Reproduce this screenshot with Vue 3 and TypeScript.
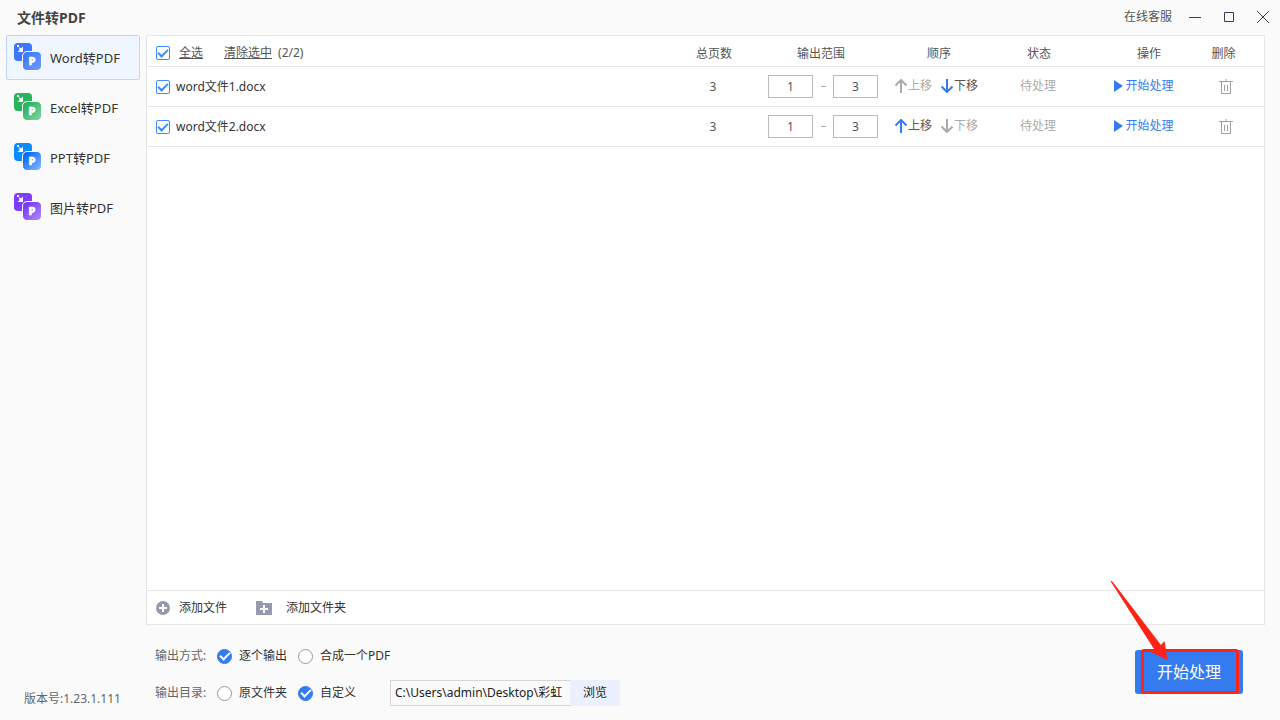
<script setup lang="ts">
import { computed, ref } from 'vue'

interface Tool { id: string; label: string; back: string; from: string; to: string }
interface FileRow { name: string; pages: number; start: string; end: string; checked: boolean }

const tools: Tool[] = [
  { id: 'word', label: 'Word转PDF', back: '#3b76ff', from: '#3f7bff', to: '#6f9dff' },
  { id: 'excel', label: 'Excel转PDF', back: '#27b45c', from: '#2bb35e', to: '#86d6a5' },
  { id: 'ppt', label: 'PPT转PDF', back: '#0a8bff', from: '#0a6cff', to: '#8fc0ff' },
  { id: 'image', label: '图片转PDF', back: '#7f3dff', from: '#7a3df5', to: '#b28cff' },
]
const active = ref('word')

const files = ref<FileRow[]>([
  { name: 'word文件1.docx', pages: 3, start: '1', end: '3', checked: true },
  { name: 'word文件2.docx', pages: 3, start: '1', end: '3', checked: true },
])
const selected = computed(() => files.value.filter((f) => f.checked).length)
const allChecked = computed({
  get: () => files.value.length > 0 && selected.value === files.value.length,
  set: (v: boolean) => files.value.forEach((f) => (f.checked = v)),
})

const mode = ref('each')
const target = ref('custom')
const path = ref('C:\\Users\\admin\\Desktop\\彩虹')

function move(i: number, step: number) {
  const [row] = files.value.splice(i, 1)
  files.value.splice(i + step, 0, row)
}
function clearSelected() {
  files.value = files.value.filter((f) => !f.checked)
}
</script>

<template>
  <div class="app">
    <header class="titlebar">
      <h1>文件转PDF</h1>
      <a href="#" class="service">在线客服</a>
      <button class="win" aria-label="最小化">
        <svg width="14" height="14" viewBox="0 0 14 14"><path d="M1 7.5h12" /></svg>
      </button>
      <button class="win" aria-label="最大化">
        <svg width="14" height="14" viewBox="0 0 14 14"><path d="M2.5 2.5h9v9h-9z" /></svg>
      </button>
      <button class="win" aria-label="关闭">
        <svg width="14" height="14" viewBox="0 0 14 14"><path d="M1 1l12 12M13 1L1 13" /></svg>
      </button>
    </header>

    <aside class="side">
      <nav>
        <button v-for="t in tools" :key="t.id" :class="['tool', { on: active === t.id }]" @click="active = t.id">
          <svg width="28" height="28" viewBox="0 0 28 28" aria-hidden="true">
            <defs>
              <linearGradient :id="'g-' + t.id" x1="0" y1="0" x2="1" y2="1">
                <stop offset="0.2" :stop-color="t.from" />
                <stop offset="1" :stop-color="t.to" />
              </linearGradient>
            </defs>
            <rect x="0" y="0" width="18" height="18" rx="4" :fill="t.back" />
            <path d="M3 2h2v2h-2zM5 4l2.200 1.600L9 3.500V9H3.500L5.500 7.200z" fill="#fff" />
            <rect x="8.5" y="8.5" width="19" height="19" rx="4.5" :fill="`url(#g-${t.id})`" stroke="#fff" />
            <text x="18" y="22" text-anchor="middle" class="mark">P</text>
          </svg>
          <span>{{ t.label }}</span>
        </button>
      </nav>
      <p class="version">版本号:1.23.1.111</p>
    </aside>

    <main class="panel">
      <div class="list">
        <table>
          <colgroup>
            <col />
            <col class="c-pages" />
            <col class="c-range" />
            <col class="c-order" />
            <col class="c-state" />
            <col class="c-action" />
            <col class="c-delete" />
          </colgroup>
          <thead>
            <tr>
              <th class="first">
                <div class="pick">
                  <input id="all" v-model="allChecked" type="checkbox" class="box" />
                  <label for="all" class="all">全选</label>
                  <button class="clear" @click="clearSelected">清除选中</button>
                  <span class="count">({{ selected }}/{{ files.length }})</span>
                </div>
              </th>
              <th>总页数</th>
              <th class="ranges">输出范围</th>
              <th>顺序</th>
              <th>状态</th>
              <th class="action">操作</th>
              <th class="remove">删除</th>
            </tr>
          </thead>
          <tbody>
            <tr v-for="(f, i) in files" :key="f.name">
              <td class="first">
                <label class="pick name"><input v-model="f.checked" type="checkbox" class="box" />{{ f.name }}</label>
              </td>
              <td>{{ f.pages }}</td>
              <td>
                <div class="range">
                  <input v-model="f.start" type="text" aria-label="起始页" />
                  <span class="dash"></span>
                  <input v-model="f.end" type="text" aria-label="结束页" />
                </div>
              </td>
              <td>
                <div class="order">
                  <button :disabled="i === 0" @click="move(i, -1)">
                    <svg width="14" height="14" viewBox="0 0 14 14"><path d="M7 14V1M1.5 6.5L7 1l5.5 5.5" /></svg>上移
                  </button>
                  <button :disabled="i === files.length - 1" @click="move(i, 1)">
                    <svg width="14" height="14" viewBox="0 0 14 14"><path d="M7 0v13M1.5 7.5L7 13l5.5-5.5" /></svg>下移
                  </button>
                </div>
              </td>
              <td class="state">待处理</td>
              <td>
                <button class="run"><svg width="9" height="12" viewBox="0 0 9 12"><path d="M0 0l9 6-9 6z" /></svg>开始处理</button>
              </td>
              <td>
                <button class="trash" aria-label="删除" @click="files.splice(i, 1)">
                  <svg width="14" height="16" viewBox="0 0 14 16"><path d="M0 2.5h14M7 0v2M2.5 3v11.5h9V3M5.5 6v6M8.5 6v6" /></svg>
                </button>
              </td>
            </tr>
          </tbody>
        </table>
      </div>
      <div class="adder">
        <button class="add-file">
          <svg width="14" height="14" viewBox="0 0 14 14"><circle cx="7" cy="7" r="7" fill="#959aaf" /><path d="M3 7h8M7 3v8" stroke="#fff" stroke-width="2" /></svg>添加文件
        </button>
        <button class="add-folder">
          <svg width="16" height="14" viewBox="0 0 16 14"><path d="M0 0h6l1 2h9v12H0z" fill="#959aaf" /><path d="M4 8h8M8 4v8" stroke="#fff" stroke-width="2" /></svg>添加文件夹
        </button>
      </div>
    </main>

    <footer class="bottom">
      <div class="options">
        <div class="line" role="radiogroup" aria-label="输出方式">
          <span class="caption">输出方式:</span>
          <label class="choice"><input v-model="mode" type="radio" name="mode" value="each" />逐个输出</label>
          <label class="choice"><input v-model="mode" type="radio" name="mode" value="merge" />合成一个PDF</label>
        </div>
        <div class="line" role="radiogroup" aria-label="输出目录">
          <span class="caption">输出目录:</span>
          <label class="choice"><input v-model="target" type="radio" name="target" value="source" />原文件夹</label>
          <label class="choice"><input v-model="target" type="radio" name="target" value="custom" />自定义</label>
          <div class="folder">
            <input v-model="path" type="text" aria-label="输出路径" />
            <button>浏览</button>
          </div>
        </div>
      </div>
      <div class="start">
        <button>开始处理</button>
        <span class="frame"></span>
        <svg class="pointer" width="60" height="82" viewBox="0 0 60 82" aria-hidden="true">
          <path d="M1 1h1L51 65l3.500-4L57.500 80 41 72l3-3L1 2z" fill="#ff2317" />
        </svg>
      </div>
    </footer>
  </div>
</template>

<style>
body {
  margin: 0;
  background: #fafafa;
}
</style>

<style scoped>
.app {
  box-sizing: border-box;
  display: grid;
  grid-template: 35px 1fr 95px / 146px 1fr;
  min-height: 100vh;
  padding-right: 15px;
  background: #fafafa;
  color: #333;
  font: 12px/18px "Noto Sans", "Noto Sans CJK SC", sans-serif;
}
button {
  padding: 0;
  border: 0;
  background: none;
  color: inherit;
  font: inherit;
  cursor: pointer;
}
input {
  box-sizing: border-box;
  margin: 0;
  color: inherit;
  font: inherit;
}
svg {
  display: block;
  flex: none;
}
.titlebar {
  grid-column: 1 / -1;
  display: flex;
  align-items: center;
  gap: 20px;
  margin-right: -5px;
  padding: 0 0 2px 17px;
}
h1 {
  flex: 1;
  margin: 0;
  padding-top: 2px;
  color: #444;
  font-size: 14px;
  line-height: 20px;
}
.service {
  margin-right: -4px;
  color: #555;
  text-decoration: none;
}
.win svg {
  fill: none;
  stroke: #333f55;
}
.side {
  grid-row: 2 / 4;
  display: flex;
  flex-direction: column;
  justify-content: space-between;
  padding: 0 6px;
}
nav {
  display: flex;
  flex-direction: column;
  gap: 5px;
}
.tool {
  box-sizing: border-box;
  display: flex;
  align-items: center;
  gap: 8px;
  height: 45px;
  padding: 0 7px;
  border: 1px solid transparent;
  border-radius: 2px;
  font-size: 13px;
}
.tool svg {
  margin-bottom: 2px;
}
.tool.on {
  border-color: #bcd6fd;
  background: #eff6ff;
}
.mark {
  fill: #fff;
  stroke: #fff;
  stroke-width: 0.6px;
  font: 800 11px "Noto Sans", sans-serif;
}
.version {
  margin: 0 0 12px 18px;
  color: #666;
}
.panel {
  display: flex;
  flex-direction: column;
  border: 1px solid #e6e6e6;
  background: #fff;
}
.list {
  flex: 1;
}
table {
  width: 100%;
  border-collapse: separate;
  border-spacing: 0;
  table-layout: fixed;
}
.c-pages { width: 80px; }
.c-range { width: 140px; }
.c-order { width: 90px; }
.c-state { width: 110px; }
.c-action { width: 94px; }
.c-delete { width: 77px; }
th,
td {
  box-sizing: border-box;
  height: 40px;
  padding: 0;
  border-bottom: 1px solid #e6e6e6;
  color: #555;
  font-weight: 400;
  text-align: center;
}
th {
  height: 31px;
  padding: 6px 0 0 2px;
}
th.ranges,
th.remove {
  padding: 6px 4px 0 0;
}
th.action {
  padding-left: 18px;
}
th.first {
  padding: 4px 0 0 9px;
}
td.first {
  padding-left: 9px;
}
.pick {
  display: flex;
  align-items: center;
}
.name {
  gap: 6px;
  color: #333;
}
.all {
  margin: 0 21px 0 9px;
}
.all,
.clear {
  text-decoration: underline;
}
.count {
  margin-left: 6px;
}
.box {
  display: grid;
  flex: none;
  place-items: center;
  width: 14px;
  height: 14px;
  border: 1px solid #3c8cff;
  border-radius: 2px;
  background: #fff;
  appearance: none;
}
.box:checked::after,
.choice input:checked::after {
  box-sizing: border-box;
  width: 10px;
  height: 6px;
  border: solid #3c8cff;
  border-width: 0 0 2px 2px;
  content: "";
  transform: translateY(-1px) rotate(-45deg);
}
.range {
  display: flex;
  align-items: center;
  justify-content: center;
}
.range input {
  width: 45px;
  height: 23px;
  padding: 0;
  border: 1px solid #bbb;
  background: #fff;
  text-align: center;
}
.dash {
  width: 5px;
  height: 1px;
  margin: 0 7px 0 8px;
  background: #aaa;
}
.order {
  display: flex;
  gap: 8px;
  justify-content: center;
  padding: 0 4px 2px 0;
}
.order button {
  display: flex;
  align-items: center;
}
.order svg {
  fill: none;
  stroke: #337bef;
  stroke-width: 2;
}
.order button:disabled {
  color: #aaa;
}
.order button:disabled svg {
  stroke: #aaa;
}
.state {
  padding-bottom: 2px;
  color: #aaa;
}
.run {
  display: flex;
  align-items: center;
  gap: 2px;
  margin: 0 auto;
  padding: 0 0 2px 8px;
  color: #337bef;
}
.run svg {
  fill: #337bef;
}
.trash {
  display: block;
  margin: 0 auto;
}
.trash svg {
  fill: none;
  stroke: #a0a0a0;
}
.adder {
  display: flex;
  gap: 29px;
  height: 33px;
  padding-left: 9px;
  border-top: 1px solid #e6e6e6;
}
.adder button {
  display: flex;
  align-items: center;
}
.add-file {
  gap: 9px;
}
.add-folder {
  gap: 14px;
}
.bottom {
  display: flex;
  align-items: flex-start;
  justify-content: space-between;
  padding: 18px 22px 0 9px;
}
.options {
  display: flex;
  flex-direction: column;
  gap: 11px;
}
.line {
  display: flex;
  align-items: center;
  height: 26px;
}
.caption {
  width: 62px;
  color: #666;
}
.choice {
  display: flex;
  gap: 7px;
  align-items: center;
  margin-right: 11px;
}
.choice input {
  display: grid;
  place-items: center;
  width: 15px;
  height: 15px;
  border: 1px solid #999;
  border-radius: 50%;
  background: #fff;
  appearance: none;
}
.choice input:checked {
  border-color: #337bef;
  background: #337bef;
}
.choice input:checked::after {
  border-color: #fff;
}
.folder {
  display: flex;
  width: 230px;
  height: 26px;
  margin-left: 23px;
  color: #222;
}
.folder input {
  flex: 1;
  min-width: 0;
  padding: 0 0 0 4px;
  border: 1px solid #d6d6d6;
  border-right: 0;
  border-radius: 0;
  background: #fafafa;
}
.folder button {
  width: 50px;
  background: #eaf1fd;
}
.start {
  position: relative;
  margin-top: 7px;
}
.start button {
  display: block;
  width: 108px;
  height: 44px;
  border-radius: 3px;
  background: #337bef;
  color: #fff;
  font-size: 16px;
}
.frame {
  position: absolute;
  inset: -1px 4px 0 6px;
  border: 3px solid #ff2317;
  border-radius: 3px;
  pointer-events: none;
}
.pointer {
  position: absolute;
  right: 73px;
  bottom: 32px;
  pointer-events: none;
}
</style>
